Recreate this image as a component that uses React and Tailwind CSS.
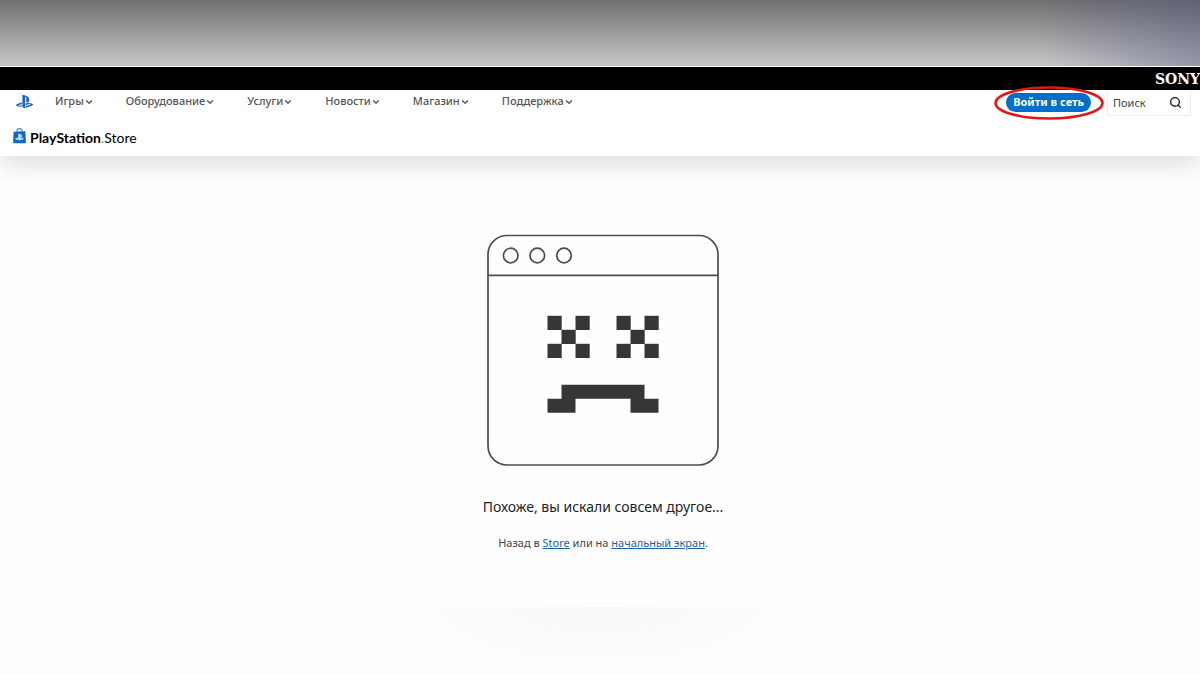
import { ChevronDown, Search } from "lucide-react";
import { SiPlaystation } from "react-icons/si";

const NAV_ITEMS = ["Игры", "Оборудование", "Услуги", "Новости", "Магазин", "Поддержка"];

// top-left corners of the filled pixels in one crossed-out eye
const EYE_PIXELS = [
  [0, 0],
  [28, 0],
  [14, 14],
  [0, 28],
  [28, 28],
];

function StoreBag({ className }) {
  return (
    <svg viewBox="0 0 24 30" className={className} aria-hidden="true">
      <path d="M7 9V6a5 5 0 0 1 10 0v3" fill="none" stroke="#4f9be0" strokeWidth="2.4" />
      <path d="M1 7l22-1 1 20.500a2 2 0 0 1-2 2H2a2 2 0 0 1-2-2z" fill="#0f68c4" />
      <SiPlaystation x="4" y="9" width="16" height="16" color="#ffffff" />
    </svg>
  );
}

function SadWindow() {
  return (
    <svg viewBox="0 0 232 232" className="w-[232px] h-[232px]" aria-hidden="true">
      <g fill="none" stroke="#4d4d4d" strokeWidth="1.7">
        <rect x="1" y="1.500" width="230" height="229.500" rx="19" />
        <path d="M1 41.300h230" />
        <circle cx="23.700" cy="21.500" r="7.300" />
        <circle cx="50.300" cy="21.500" r="7.300" />
        <circle cx="77" cy="21.500" r="7.300" />
      </g>
      <g fill="#363636">
        {[60.5, 129.5].map((left) =>
          EYE_PIXELS.map(([x, y]) => (
            <rect key={`${left}-${x}-${y}`} x={left + x} y={81.8 + y} width="14.200" height="14.200" />
          ))
        )}
        <path d="M74.500 150.800h83v14h14v14h-28v-14h-55v14h-28v-14h14z" />
      </g>
    </svg>
  );
}

function Header() {
  return (
    <header className="relative bg-white px-3 shadow-[0_10px_24px_rgba(0,0,0,0.12)]">
      <div className="-mr-[3px] flex items-start justify-between">
        <div className="flex items-center h-[22px]">
          <a href="#home" aria-label="PlayStation" className="ml-1 text-[#1467c4]">
            <SiPlaystation size={17} />
          </a>
          <nav className="ml-[22px] flex items-center gap-8">
            {NAV_ITEMS.map((item) => (
              <button
                key={item}
                type="button"
                className="flex items-center text-[11px] leading-4 font-medium text-[#555555]"
              >
                {item}
                <ChevronDown size={10} strokeWidth={3} className="mt-[2px]" />
              </button>
            ))}
          </nav>
        </div>

        <div className="flex items-start gap-4">
          <div className="relative mt-[3px]">
            <button
              type="button"
              className="flex h-[19px] items-center rounded-full bg-[#0070cc] px-[7px] pb-[2px] text-[11px] leading-4 font-bold text-white"
            >
              Войти в сеть
            </button>
            <svg
              viewBox="0 0 110 34"
              className="absolute left-1/2 top-1/2 w-[110px] h-[34px] -translate-x-1/2 -translate-y-1/2 pointer-events-none"
              aria-hidden="true"
            >
              <ellipse cx="55" cy="17" rx="53.500" ry="15.500" fill="none" stroke="#e8150f" strokeWidth="2.600" />
            </svg>
          </div>
          <label className="flex h-[26px] w-[84px] items-center border border-t-0 border-[#eeeeee] pl-[5px] pr-2">
            <input
              type="text"
              aria-label="Поиск"
              placeholder="Поиск"
              className="min-w-0 flex-1 bg-transparent text-[11px] leading-4 text-[#444444] outline-none placeholder:text-[#444444]"
            />
            <Search size={13} strokeWidth={2.5} className="text-[#222222]" />
          </label>
        </div>
      </div>

      <a href="#store" className="flex h-10 items-center pt-1">
        <StoreBag className="ml-[1px] mb-1 w-[13px] h-4" />
        <span className="ml-1 font-['Lato',sans-serif] text-[14px] leading-5 text-black">
          <span className="font-bold">PlayStation</span>
          <span className="text-[#999999]">.</span>Store
        </span>
      </a>
    </header>
  );
}

export default function App() {
  return (
    <div className="flex min-h-screen flex-col overflow-hidden bg-[#fefefe] font-['Noto_Sans',sans-serif]">
      <div className="flex h-[67px] justify-end border-b border-white bg-linear-to-b from-[#707070] to-[#c9c9c9]">
        <div className="w-[160px] bg-linear-to-r from-transparent to-[#484e80]/40" />
      </div>
      <div className="flex h-[23px] items-center justify-end bg-black">
        <span className="font-['DejaVu_Serif',serif] text-[14px] leading-4 font-bold text-white">SONY</span>
      </div>
      <Header />

      <main className="flex flex-1 flex-col items-center pl-[6px] pt-[78px]">
        <SadWindow />
        <h1 className="mt-[31px] text-[14px] leading-5 text-[#1f1f1f]">Похоже, вы искали совсем другое...</h1>
        <p className="mt-[18px] text-[11px] leading-4 text-[#444444]">
          Назад в{" "}
          <a href="#store" className="text-[#1566ad] underline">
            Store
          </a>{" "}
          или на{" "}
          <a href="#home" className="text-[#1566ad] underline">
            начальный экран
          </a>
          .
        </p>
      </main>
      <footer className="h-[68px] bg-[radial-gradient(ellipse_220px_70px_at_50%_0%,#f6f8fa,#fefefe)]" />
    </div>
  );
}
